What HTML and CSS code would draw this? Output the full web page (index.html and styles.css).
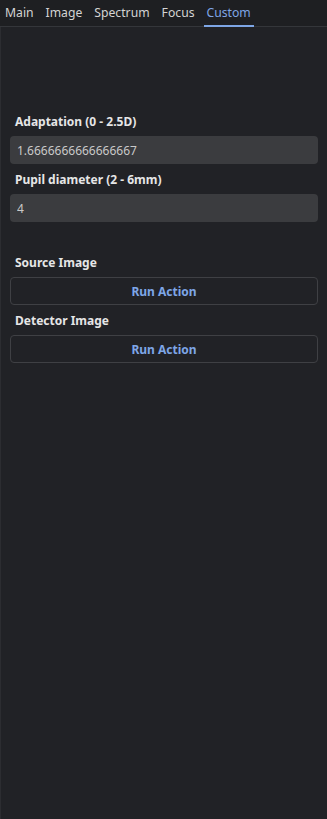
FILE: index.html
```html
<!DOCTYPE html>
<html lang="en">
<head>
    <meta charset="UTF-8">
    <meta name="viewport" content="width=device-width, initial-scale=1.0">
    <title>Custom Panel</title>
    <link rel="stylesheet" href="styles.css">
</head>
<body>
    <div class="tabs">
        <div class="tab">Main</div>
        <div class="tab">Image</div>
        <div class="tab">Spectrum</div>
        <div class="tab">Focus</div>
        <div class="tab active">Custom</div>
    </div>

    <div class="panel">
        <div class="field">
            <label>Adaptation (0 - 2.5D)</label>
            <input type="text" value="1.6666666666666667">
        </div>
        <div class="field">
            <label>Pupil diameter (2 - 6mm)</label>
            <input type="text" value="4">
        </div>

        <div class="field actions">
            <label>Source Image</label>
            <button>Run Action</button>
        </div>
        <div class="field">
            <label>Detector Image</label>
            <button>Run Action</button>
        </div>
    </div>
</body>
</html>
```

FILE: styles.css
```css
body {
    margin: 0;
    padding: 0;
    background-color: #1e1f22;
    font-family: "Noto Sans", "Open Sans", sans-serif;
    height: 819px;
    display: flex;
    flex-direction: column;
    overflow: hidden;
}

.tabs {
    display: flex;
    gap: 6px;
    height: 26px;
    padding-left: 2px;
    border-bottom: 1px solid #34363a;
}

.tab {
    font-size: 12.2px;
    color: #d4d4d4;
    padding: 4px 3px 0;
    line-height: 18px;
    border-bottom: 2px solid transparent;
    margin-bottom: -1px;
}

.tab.active {
    color: #7ea6e6;
    border-bottom-color: #7ea6e6;
}

.panel {
    flex: 1;
    background-color: #212226;
    border-left: 1px solid #2c2d31;
    padding: 83px 9px 0 9px;
}

.field {
    display: flex;
    flex-direction: column;
    margin-bottom: 4px;
}

.field.actions {
    margin-top: 29px;
}

label {
    font-size: 12px;
    font-weight: bold;
    color: #e6e6e6;
    padding: 2px 0 0 5px;
    line-height: 20px;
    margin-bottom: 4px;
}

input {
    font-family: inherit;
    font-size: 12px;
    color: #c9c9c9;
    background-color: #3b3c3f;
    border: none;
    border-radius: 4px;
    height: 28px;
    padding: 0 7px;
    outline: none;
}

button {
    font-family: inherit;
    font-size: 12px;
    font-weight: bold;
    color: #7ea6e6;
    background-color: transparent;
    border: 1px solid #3f4044;
    border-radius: 4px;
    height: 28px;
    cursor: pointer;
}
```
